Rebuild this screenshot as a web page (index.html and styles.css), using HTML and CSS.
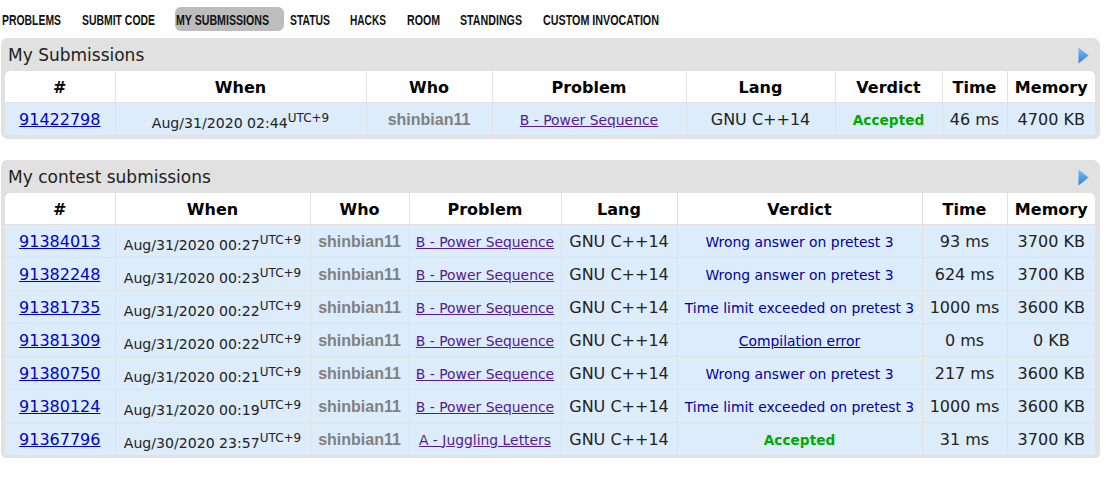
FILE: index.html
```html
<!DOCTYPE html>
<html>
<head>
<meta charset="utf-8">
<link rel="stylesheet" href="styles.css">
</head>
<body>
<div class="nav">
  <a class="nav-item"><svg width="59" height="24"><text x="0" y="18" textLength="59" lengthAdjust="spacingAndGlyphs">PROBLEMS</text></svg></a>
  <a class="nav-item"><svg width="73" height="24"><text x="0" y="18" textLength="73" lengthAdjust="spacingAndGlyphs">SUBMIT CODE</text></svg></a>
  <a class="nav-item active"><svg width="93" height="24"><text x="0" y="18" textLength="93" lengthAdjust="spacingAndGlyphs">MY SUBMISSIONS</text></svg></a>
  <a class="nav-item"><svg width="40" height="24"><text x="0" y="18" textLength="40" lengthAdjust="spacingAndGlyphs">STATUS</text></svg></a>
  <a class="nav-item"><svg width="36" height="24"><text x="0" y="18" textLength="36" lengthAdjust="spacingAndGlyphs">HACKS</text></svg></a>
  <a class="nav-item"><svg width="33" height="24"><text x="0" y="18" textLength="33" lengthAdjust="spacingAndGlyphs">ROOM</text></svg></a>
  <a class="nav-item"><svg width="62" height="24"><text x="0" y="18" textLength="62" lengthAdjust="spacingAndGlyphs">STANDINGS</text></svg></a>
  <a class="nav-item"><svg width="116" height="24"><text x="0" y="18" textLength="116" lengthAdjust="spacingAndGlyphs">CUSTOM INVOCATION</text></svg></a>
</div>

<div class="roundbox">
  <div class="caption">
    <span class="title">My Submissions</span>
    <svg class="arrow" width="11" height="17" viewBox="0 0 11 17"><defs><linearGradient id="g1" x1="0" y1="0" x2="0" y2="1"><stop offset="0" stop-color="#7cc0f4"/><stop offset="1" stop-color="#2b7fd6"/></linearGradient></defs><polygon points="0.5,0.5 10.5,8.5 0.5,16.5" fill="url(#g1)"/></svg>
  </div>
  <div class="tablewrap">
    <table class="status t1">
      <colgroup><col style="width:110px"><col style="width:251px"><col style="width:126px"><col style="width:194px"><col style="width:149px"><col style="width:107px"><col style="width:65px"><col style="width:88px"></colgroup>
      <tr><th>#</th><th>When</th><th>Who</th><th>Problem</th><th>Lang</th><th>Verdict</th><th>Time</th><th>Memory</th></tr>
      <tr><td><a class="id">91422798</a></td><td><span class="time">Aug/31/2020 02:44<sup>UTC+9</sup></span></td><td><span class="user">shinbian11</span></td><td><a class="prob">B - Power Sequence</a></td><td>GNU C++14</td><td><span class="ok">Accepted</span></td><td>46 ms</td><td>4700 KB</td></tr>
    </table>
  </div>
</div>

<div class="roundbox second">
  <div class="caption">
    <span class="title">My contest submissions</span>
    <svg class="arrow" width="11" height="17" viewBox="0 0 11 17"><defs><linearGradient id="g2" x1="0" y1="0" x2="0" y2="1"><stop offset="0" stop-color="#7cc0f4"/><stop offset="1" stop-color="#2b7fd6"/></linearGradient></defs><polygon points="0.5,0.5 10.5,8.5 0.5,16.5" fill="url(#g2)"/></svg>
  </div>
  <div class="tablewrap">
    <table class="status t2">
      <colgroup><col style="width:110px"><col style="width:195px"><col style="width:99px"><col style="width:152px"><col style="width:116px"><col style="width:245px"><col style="width:85px"><col style="width:88px"></colgroup>
      <tr><th>#</th><th>When</th><th>Who</th><th>Problem</th><th>Lang</th><th>Verdict</th><th>Time</th><th>Memory</th></tr>
      <tr><td><a class="id">91384013</a></td><td><span class="time">Aug/31/2020 00:27<sup>UTC+9</sup></span></td><td><span class="user">shinbian11</span></td><td><a class="prob">B - Power Sequence</a></td><td>GNU C++14</td><td><span class="rej">Wrong answer on pretest 3</span></td><td>93 ms</td><td>3700 KB</td></tr>
      <tr><td><a class="id">91382248</a></td><td><span class="time">Aug/31/2020 00:23<sup>UTC+9</sup></span></td><td><span class="user">shinbian11</span></td><td><a class="prob">B - Power Sequence</a></td><td>GNU C++14</td><td><span class="rej">Wrong answer on pretest 3</span></td><td>624 ms</td><td>3700 KB</td></tr>
      <tr><td><a class="id">91381735</a></td><td><span class="time">Aug/31/2020 00:22<sup>UTC+9</sup></span></td><td><span class="user">shinbian11</span></td><td><a class="prob">B - Power Sequence</a></td><td>GNU C++14</td><td><span class="rej">Time limit exceeded on pretest 3</span></td><td>1000 ms</td><td>3600 KB</td></tr>
      <tr><td><a class="id">91381309</a></td><td><span class="time">Aug/31/2020 00:22<sup>UTC+9</sup></span></td><td><span class="user">shinbian11</span></td><td><a class="prob">B - Power Sequence</a></td><td>GNU C++14</td><td><a class="rej link">Compilation error</a></td><td>0 ms</td><td>0 KB</td></tr>
      <tr><td><a class="id">91380750</a></td><td><span class="time">Aug/31/2020 00:21<sup>UTC+9</sup></span></td><td><span class="user">shinbian11</span></td><td><a class="prob">B - Power Sequence</a></td><td>GNU C++14</td><td><span class="rej">Wrong answer on pretest 3</span></td><td>217 ms</td><td>3600 KB</td></tr>
      <tr><td><a class="id">91380124</a></td><td><span class="time">Aug/31/2020 00:19<sup>UTC+9</sup></span></td><td><span class="user">shinbian11</span></td><td><a class="prob">B - Power Sequence</a></td><td>GNU C++14</td><td><span class="rej">Time limit exceeded on pretest 3</span></td><td>1000 ms</td><td>3600 KB</td></tr>
      <tr><td><a class="id">91367796</a></td><td><span class="time">Aug/30/2020 23:57<sup>UTC+9</sup></span></td><td><span class="user">shinbian11</span></td><td><a class="prob">A - Juggling Letters</a></td><td>GNU C++14</td><td><span class="ok">Accepted</span></td><td>31 ms</td><td>3700 KB</td></tr>
    </table>
  </div>
</div>
</body>
</html>
```

FILE: styles.css
```css
html, body {
  margin: 0;
  padding: 0;
  background: #fff;
}
body {
  font-family: "DejaVu Sans", Verdana, sans-serif;
  color: #222;
}
.nav {
  display: flex;
  align-items: flex-start;
  padding: 7px 0 0 2px;
  height: 24px;
  margin-bottom: 7px;
}
.nav-item {
  display: block;
  height: 24px;
  margin-right: 20.5px;
}
.nav-item svg {
  display: block;
  overflow: visible;
}
.nav-item text {
  font-family: "Liberation Sans", Arial, sans-serif;
  font-weight: bold;
  font-size: 14.5px;
  fill: #111;
}
.nav-item.active {
  background: #bdbdbd;
  border-radius: 6px;
  padding: 0 15px 0 1px;
  margin-left: -0.5px;
  margin-right: 6px;
}
.roundbox {
  background: #e1e1e1;
  border-radius: 6px;
  margin: 0 7px 0 1px;
  padding: 0 4px 3px 4px;
  box-shadow: 1px 1px 1px rgba(0,0,0,0.12);
}
.roundbox.second {
  margin-top: 22px;
}
.caption {
  display: flex;
  justify-content: space-between;
  align-items: center;
  height: 33px;
}
.title {
  font-size: 17px;
  color: #222;
  padding-left: 3px;
}
.arrow {
  margin-right: 6px;
  margin-top: 1px;
}
.tablewrap {
  background: #fff;
  border-radius: 6px 6px 0 0;
  overflow: hidden;
}
table.status {
  border-collapse: collapse;
  table-layout: fixed;
  width: 100%;
}
table.status th, table.status td {
  border-left: 1px solid #e1e1e1;
  border-top: 1px solid #e1e1e1;
  text-align: center;
  padding: 0 2px;
  white-space: nowrap;
}
table.status tr > :first-child { border-left: none; }
table.status tr:first-child > * { border-top: none; }
table.status th {
  background: #fff;
  font-size: 16px;
  font-weight: bold;
  color: #000;
  height: 30px;
  padding-top: 1px;
}
table.status td {
  background: #ddecfb;
  font-size: 16px;
  height: 32px;
  color: #222;
}
.id {
  color: #0000cc;
  text-decoration: underline;
}
.time {
  font-size: 14.1px;
  position: relative;
  top: 3px;
}
.time sup {
  font-size: 12px;
  vertical-align: 5px;
  position: relative;
  top: -1px;
}
.user {
  font-family: "Liberation Sans", Arial, sans-serif;
  font-weight: bold;
  color: #808080;
}
.prob {
  font-size: 13.9px;
  color: #551a8b;
  text-decoration: underline;
}
.rej {
  font-size: 13.9px;
  color: #0000a0;
}
.rej.link { text-decoration: underline; }
.ok {
  font-size: 13.7px;
  font-weight: bold;
  color: #00a900;
}
```
